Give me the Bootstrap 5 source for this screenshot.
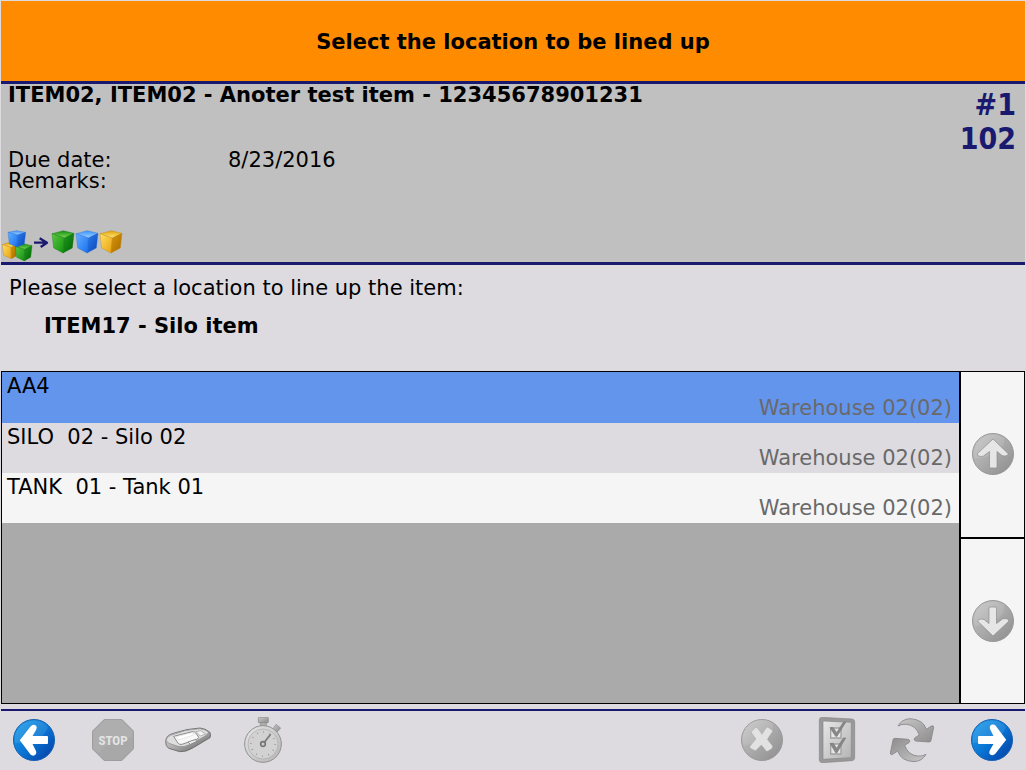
<!DOCTYPE html>
<html lang="en">
<head>
<meta charset="utf-8">
<meta name="viewport" content="width=device-width, initial-scale=1">
<title>Select location</title>
<link href="https://cdn.jsdelivr.net/npm/bootstrap@5.3.0/dist/css/bootstrap.min.css" rel="stylesheet">
<style>
  body { font-family: "DejaVu Sans", Verdana, sans-serif; font-size: 21px; line-height: 21px; color: #000; background: #dddbe0; }
  .screen { min-height: 100vh; padding: 1px 1px 0; }
  .title-bar { height: 83px; padding-top: 2px; background: #ff8c00; border-bottom: 3px solid #191970; }
  .title-bar h1, .job h2, .ask h2 { font-size: 21px; line-height: 21px; font-weight: 700; margin: 0; }
  .job { background: #c0c0c0; border-bottom: 3px solid #191970; }
  .job-text { padding: 1px 8px 0 7px; }
  .job dl { display: grid; grid-template-columns: 220px 1fr; margin: 44px 0 33px; }
  .job dt { font-weight: 400; }
  .job dd { margin: 0; }
  .job-number { font-family: "DejaVu Sans Condensed", "DejaVu Sans", sans-serif; font-size: 30px; line-height: 34px; color: #191970; padding: 4px 9px 0 0; }
  .ask { padding: 13px 8px 34px; }
  .ask h2 { margin: 17px 0 0 35px; }
  .picker { border: 1px solid #000; margin-bottom: 5px; }
  .choices { background: #aaa; }
  .choice { min-height: 50px; padding: 4px 7px 4px 5px; border: 0; background: #dddbe0; color: #000; white-space: pre; text-align: left; line-height: 21px; }
  .choice:nth-child(odd) { background: #f5f5f5; }
  .choice.selected { min-height: 51px; background: #6495ed; }
  .choice .place { color: #696969; text-align: right; }
  .scroller { width: 65px; border-left: 2px solid #000; }
  .scroller button { flex: 1 1 0; border: 0; background: #f5f5f5; padding: 0; }
  .scroller button + button { border-top: 2px solid #000; }
  .tools { height: 61px; border-top: 2px solid #191970; padding: 0 12px 1px; }
  .tools button { border: 0; background: none; padding: 0; display: flex; align-items: center; justify-content: center; }
  .tool { width: 75px; }
  .tools-left { margin-left: 20px; }
  .tools-right { margin-right: 22px; }
  .stop-word { font: 700 39px "Roboto Condensed", Roboto, sans-serif; }
  svg { display: block; }
</style>
</head>
<body>
<svg width="0" height="0" class="position-absolute" aria-hidden="true">
  <defs>
    <linearGradient id="gBlue" x1="0" y1="0" x2="1" y2="1"><stop offset="0" stop-color="#1fa0ea"/><stop offset=".5" stop-color="#0a76d4"/><stop offset="1" stop-color="#0338a0"/></linearGradient>
    <linearGradient id="gGrey" x1="0" y1="0" x2="1" y2="1"><stop offset="0" stop-color="#c8c8c8"/><stop offset=".5" stop-color="#aaa"/><stop offset="1" stop-color="#8c8c8c"/></linearGradient>
    <linearGradient id="gPale" x1="0" y1="0" x2="1" y2="1"><stop offset="0" stop-color="#e6e6e6"/><stop offset="1" stop-color="#b4b4b4"/></linearGradient>
    <linearGradient id="gScan" x1="0" y1="0" x2="1" y2="1"><stop offset="0" stop-color="#eee"/><stop offset=".5" stop-color="#aaa"/><stop offset="1" stop-color="#555"/></linearGradient>
    <linearGradient id="bT" x1="0" y1="0" x2="0" y2="1"><stop offset="0" stop-color="#3b93ff"/><stop offset="1" stop-color="#9cd0ff"/></linearGradient>
    <linearGradient id="bL" x1="0" y1="0" x2="1" y2="1"><stop offset="0" stop-color="#62b0ff"/><stop offset="1" stop-color="#1a6ff0"/></linearGradient>
    <linearGradient id="bR" x1="0" y1="0" x2="1" y2="1"><stop offset="0" stop-color="#2b7df0"/><stop offset="1" stop-color="#0a48b8"/></linearGradient>
    <linearGradient id="nT" x1="0" y1="0" x2="0" y2="1"><stop offset="0" stop-color="#148c14"/><stop offset="1" stop-color="#7ddc50"/></linearGradient>
    <linearGradient id="nL" x1="0" y1="0" x2="1" y2="1"><stop offset="0" stop-color="#5cc840"/><stop offset="1" stop-color="#109010"/></linearGradient>
    <linearGradient id="nR" x1="0" y1="0" x2="1" y2="1"><stop offset="0" stop-color="#1e9c1e"/><stop offset="1" stop-color="#046404"/></linearGradient>
    <linearGradient id="yT" x1="0" y1="0" x2="0" y2="1"><stop offset="0" stop-color="#e0a000"/><stop offset="1" stop-color="#ffea80"/></linearGradient>
    <linearGradient id="yL" x1="0" y1="0" x2="1" y2="1"><stop offset="0" stop-color="#ffe060"/><stop offset="1" stop-color="#e8a010"/></linearGradient>
    <linearGradient id="yR" x1="0" y1="0" x2="1" y2="1"><stop offset="0" stop-color="#d89a08"/><stop offset="1" stop-color="#a86800"/></linearGradient>
    <path id="arrowLeft" d="M6.800 21.300 L17.500 7.500 Q20 4.500 22.800 6.500 Q24.500 8 23 11 L19.500 17 H34 Q35 17 35 18 V24 Q35 25 34 25 H19.500 L23 32 Q24 35.500 21 36.500 Q19 37 17.500 35.500 Z"/>
    <path id="arrowUp" d="M21 6 L36 20.500 Q36.500 22 35 22.500 Q32 23.500 30 22.500 L25 18.500 V33.500 Q25 35 23.500 35 H19 Q17.500 35 17.500 33.500 V18.500 L11.500 23 Q9 24 6.500 23 Q5 22 5.500 20.500 Z"/>
  </defs>
</svg>

<div class="screen d-flex flex-column">
  <header class="title-bar d-flex align-items-center justify-content-center"><h1>Select the location to be lined up</h1></header>

  <section class="job">
    <div class="d-flex justify-content-between">
      <div class="job-text flex-grow-1">
        <h2>ITEM02, ITEM02 - Anoter test item - 12345678901231</h2>
        <dl>
          <dt>Due date:</dt><dd>8/23/2016</dd>
          <dt>Remarks:</dt><dd></dd>
        </dl>
      </div>
      <div class="job-number fw-bold text-end">#1<br>102</div>
    </div>
    <svg width="129" height="37" viewBox="3 0 387 111" role="img" aria-label="Line up items">
      <g stroke-linejoin="round">
        <g stroke="#b87c08" stroke-width="1"><path fill="url(#yT)" d="M7 59 L24 53 48 57 35 67Z"/><path fill="url(#yL)" d="M7 59 L33 67 34 101 11 91Z"/><path fill="url(#yR)" d="M33 67 L48 60 V94 L34 101Z"/></g>
        <g stroke="#08700c" stroke-width="1"><path fill="url(#nT)" d="M46 65 L70 56 96 62 74 73Z"/><path fill="url(#nL)" d="M46 65 L74 73 73 108 50 97Z"/><path fill="url(#nR)" d="M74 73 L96 62 92 97 73 108Z"/></g>
        <g stroke="#2468c8" stroke-width="1"><path fill="url(#bT)" d="M24 22 L50 17 77 22 52 30Z"/><path fill="url(#bL)" d="M24 22 L52 30 51 66 28 56Z"/><path fill="url(#bR)" d="M52 30 L77 22 73 57 51 66Z"/></g>
        <path d="M102 53 H139 M119 40 L141 53 L122 66" fill="none" stroke="#191970" stroke-width="7"/>
        <g stroke="#08700c" stroke-width="1"><path fill="url(#nT)" d="M156 26 L190 17 222 25 193 39Z"/><path fill="url(#nL)" d="M156 26 L193 39 189 84 161 69Z"/><path fill="url(#nR)" d="M193 39 L222 25 217 69 189 84Z"/></g>
        <g stroke="#2468c8" stroke-width="1"><path fill="url(#bT)" d="M228 26 L262 17 294 25 265 39Z"/><path fill="url(#bL)" d="M228 26 L265 39 261 84 233 69Z"/><path fill="url(#bR)" d="M265 39 L294 25 289 69 261 84Z"/></g>
        <g stroke="#b87c08" stroke-width="1"><path fill="url(#yT)" d="M300 26 L334 17 366 25 337 39Z"/><path fill="url(#yL)" d="M300 26 L337 39 333 84 305 69Z"/><path fill="url(#yR)" d="M337 39 L366 25 361 69 333 84Z"/></g>
      </g>
    </svg>
  </section>

  <section class="ask">
    <p class="m-0">Please select a location to line up the item:</p>
    <h2>ITEM17 - Silo item</h2>
  </section>

  <main class="picker d-flex flex-grow-1">
    <div class="choices d-flex flex-column flex-grow-1">
      <button type="button" class="choice selected d-flex flex-column justify-content-between align-items-stretch" aria-pressed="true"><span>AA4</span><span class="place">Warehouse 02(02)</span></button>
      <button type="button" class="choice d-flex flex-column justify-content-between align-items-stretch"><span>SILO  02 - Silo 02</span><span class="place">Warehouse 02(02)</span></button>
      <button type="button" class="choice d-flex flex-column justify-content-between align-items-stretch"><span>TANK  01 - Tank 01</span><span class="place">Warehouse 02(02)</span></button>
    </div>
    <div class="scroller d-flex flex-column">
      <button type="button" class="d-flex align-items-center justify-content-center" aria-label="Scroll up">
        <svg width="42" height="42" viewBox="0 0 42 42"><circle cx="21" cy="21" r="20.500" fill="url(#gGrey)" stroke="#999"/><path d="M3 26 A19 19 0 0 1 32 5 Q35 22 3 26Z" fill="#fff" opacity=".1"/><use href="#arrowUp" fill="#e6e6e6" stroke="#8c8c8c" stroke-width=".7"/></svg>
      </button>
      <button type="button" class="d-flex align-items-center justify-content-center" aria-label="Scroll down">
        <svg width="42" height="42" viewBox="0 0 42 42"><circle cx="21" cy="21" r="20.500" fill="url(#gGrey)" stroke="#999"/><path d="M3 26 A19 19 0 0 1 32 5 Q35 22 3 26Z" fill="#fff" opacity=".1"/><use href="#arrowUp" transform="rotate(180 21 21)" fill="#e6e6e6" stroke="#8c8c8c" stroke-width=".7"/></svg>
      </button>
    </div>
  </main>

  <footer class="tools d-flex justify-content-between align-items-center">
    <div class="d-flex align-items-center">
      <button type="button" aria-label="Back">
        <svg width="42" height="42" viewBox="0 0 42 42"><circle cx="21" cy="21" r="20.500" fill="url(#gBlue)" stroke="#1560b4"/><path d="M2 24 A19 19 0 0 1 35 8 Q30 24 2 24Z" fill="#fff" opacity=".1"/><use href="#arrowLeft" fill="#fff"/></svg>
      </button>
      <div class="tools-left d-flex">
        <button type="button" class="tool" aria-label="Stop">
          <svg width="42" height="42" viewBox="276 57 126 126"><path d="M313 58 H365 L401 94 V146 L365 182 H313 L277 146 V94Z" fill="#a8a8a8" stroke="#999" stroke-width="3"/><path d="M314 61 H364 L398 95 V112 Q320 120 296 160 L280 144 V95Z" fill="#fff" opacity=".08"/><text class="stop-word" x="339" y="134" text-anchor="middle" fill="#e4e4e4">STOP</text></svg>
        </button>
        <button type="button" class="tool" aria-label="Scanner">
          <svg width="46" height="46" viewBox="45 51 138 138"><path d="M47 124 Q46 112 59 104 L73 99 Q110 86 150 84 Q165 85 179 96 Q185 104 180 113 L130 143 Q107 157 89 155 L56 145 Q46 138 47 124Z" fill="url(#gScan)" stroke="#666" stroke-width="2.500"/><path d="M49 121 Q48 113 61 106 Q108 87 150 86 Q163 87 176 96 Q172 106 162 110 L118 134 Q100 143 84 139 L60 131 Q50 128 49 121Z" fill="#dedede" stroke="#888" stroke-width="2"/><path d="M71 109 L127 95 Q134 94 138 100 L146 112 Q146 116 139 118 L96 133 Q88 135 83 128Z" fill="#f8f8f8" stroke="#777" stroke-width="2.500"/><path d="M79 110 L125 98 133 104 86 120Z" fill="#fff" stroke="#bbb"/><path d="M138 95 L152 92 167 102 151 108Z" fill="#f3f3f3" stroke="#999" stroke-width="2"/><path d="M114 126 L136 119 141 124 121 133Z" fill="#eee" stroke="#777" stroke-width="2"/></svg>
        </button>
        <button type="button" class="tool" aria-label="Timer">
          <svg width="46" height="46" viewBox="270 51 138 138"><path d="M331 65 H349 V82 H331Z" fill="#b0b0b0" stroke="#888" stroke-width="2"/><rect x="325" y="52" width="30" height="16" rx="2" fill="url(#gGrey)" stroke="#888" stroke-width="2"/><path d="M369 86 L378 73 392 84 382 96Z" fill="url(#gGrey)" stroke="#909090" stroke-width="2"/><circle cx="339" cy="132" r="55" fill="url(#gPale)" stroke="#929292" stroke-width="3"/><circle cx="339" cy="132" r="45" fill="#d2d2d2" stroke="#aaa" stroke-width="2"/><circle cx="339" cy="132" r="36" fill="none" stroke="#888" stroke-width="5" stroke-dasharray="2 16.850"/><path d="M343 127 L362 103" stroke="#777" stroke-width="5"/><circle cx="339" cy="132" r="7" fill="#ccc" stroke="#777" stroke-width="5"/></svg>
        </button>
      </div>
    </div>
    <div class="d-flex align-items-center">
      <div class="tools-right d-flex">
        <button type="button" class="tool" aria-label="Cancel">
          <svg width="42" height="42" viewBox="33 57 126 126"><circle cx="96" cy="120" r="61.500" fill="url(#gGrey)" stroke="#999" stroke-width="3"/><path d="M42 136 A56 56 0 0 1 130 72 Q130 126 42 136Z" fill="#fff" opacity=".1"/><path d="M66 93 L76 83 Q80 81 84 86 L96 103 L108 84 Q112 79 117 84 L127 91 Q129 95 125 98 L112 118 L127 137 Q129 142 125 146 L114 153 Q109 155 106 150 L94 135 L80 149 Q76 154 71 150 L60 144 Q58 140 62 136 L78 117 L65 99 Q63 96 66 93Z" fill="#e2e2e2" stroke="#999" stroke-width="1"/></svg>
        </button>
        <button type="button" class="tool" aria-label="Checklist">
          <svg width="46" height="46" viewBox="252 51 138 138"><path d="M275 52 L366 57 Q374 58 374 66 V174 Q374 181 366 182 L276 188 Q268 187 268 180 V60 Q268 53 275 52Z" fill="#999" stroke="#888" stroke-width="2"/><path d="M279 63 L364 67 V173 L279 178Z" fill="url(#gPale)" stroke="#868686" stroke-width="2"/><path d="M302 84 H333 V114 H302Z M302 132 H333 V162 H302Z" fill="#e6e6e6" stroke="#a0a0a0" stroke-width="4"/><path d="M300 83 H310 L320 98 L340 67 H347 L321 109 H317Z M300 130 H310 L320 145 L340 114 H347 L321 158 H317Z" fill="#888" stroke="#777" stroke-width="2"/></svg>
        </button>
        <button type="button" class="tool" aria-label="Refresh">
          <svg width="46" height="46" viewBox="39 51 138 138"><g fill="url(#gGrey)" stroke="#868686" stroke-width="2.500" stroke-linejoin="round"><path id="turn" d="M66 78 Q78 57 102 56 Q142 58 151 88 L166 78 Q173 75 173 82 L165 121 Q165 126 159 126 L119 123 Q110 119 117 113 L130 105 Q119 75 91 73 Q78 71 66 78Z"/><use href="#turn" transform="rotate(180 108 120.500)"/></g></svg>
        </button>
      </div>
      <button type="button" aria-label="Next">
        <svg width="42" height="42" viewBox="0 0 42 42"><circle cx="21" cy="21" r="20.500" fill="url(#gBlue)" stroke="#1560b4"/><path d="M2 24 A19 19 0 0 1 35 8 Q30 24 2 24Z" fill="#fff" opacity=".1"/><use href="#arrowLeft" transform="rotate(180 21 21)" fill="#fff"/></svg>
      </button>
    </div>
  </footer>
</div>
<script src="https://cdn.jsdelivr.net/npm/bootstrap@5.3.0/dist/js/bootstrap.bundle.min.js"></script>
</body>
</html>
